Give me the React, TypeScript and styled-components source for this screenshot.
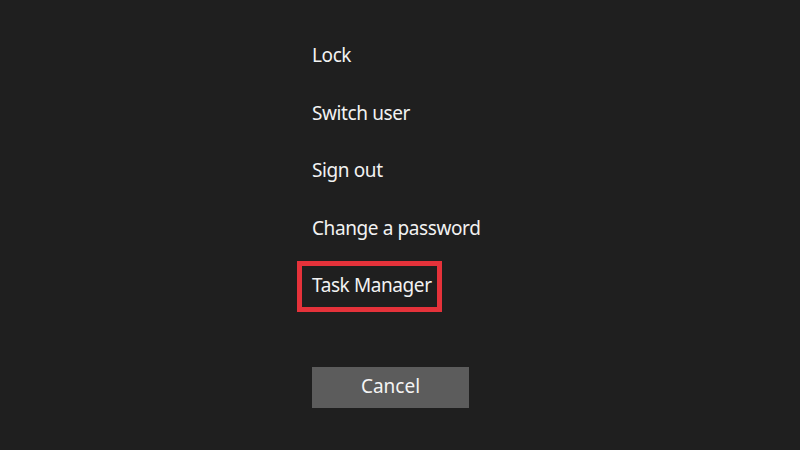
import React from 'react';
import styled, { createGlobalStyle } from 'styled-components';

const GlobalStyle = createGlobalStyle`
  html, body {
    margin: 0;
    padding: 0;
    background: #1f1f1f;
  }
`;

const StyledScreen = styled.div`
  width: 800px;
  height: 450px;
  background: #1f1f1f;
  box-sizing: border-box;
  padding: 40px 0 0 312px;
  font-family: 'Noto Sans', 'Open Sans', sans-serif;
  color: #f2f2f2;
  overflow: hidden;
`;

const StyledMenu = styled.ul`
  list-style: none;
  margin: 0;
  padding: 0;
  display: flex;
  flex-direction: column;
`;

const StyledItem = styled.li<{ $highlighted?: boolean }>`
  position: relative;
  height: 57.5px;
  line-height: 30px;
  font-size: 19px;
  letter-spacing: -0.4px;

  ${({ $highlighted }) =>
    $highlighted &&
    `
    &::after {
      content: '';
      position: absolute;
      left: -15px;
      top: -9px;
      width: 145px;
      height: 51px;
      border: 5px solid #e5323a;
      box-sizing: border-box;
    }
  `}
`;

const StyledCancel = styled.button`
  margin-top: 39px;
  width: 157px;
  height: 41px;
  border: none;
  background: #5c5c5c;
  color: #f4f4f4;
  font-family: inherit;
  font-size: 19px;
  padding: 0 0 2px;
  cursor: pointer;
`;

const items = ['Lock', 'Switch user', 'Sign out', 'Change a password', 'Task Manager'];

const App: React.FC = () => (
  <>
    <GlobalStyle />
    <StyledScreen>
      <StyledMenu>
        {items.map((item) => (
          <StyledItem key={item} $highlighted={item === 'Task Manager'}>
            {item}
          </StyledItem>
        ))}
      </StyledMenu>
      <StyledCancel type="button">Cancel</StyledCancel>
    </StyledScreen>
  </>
);

export default App;
